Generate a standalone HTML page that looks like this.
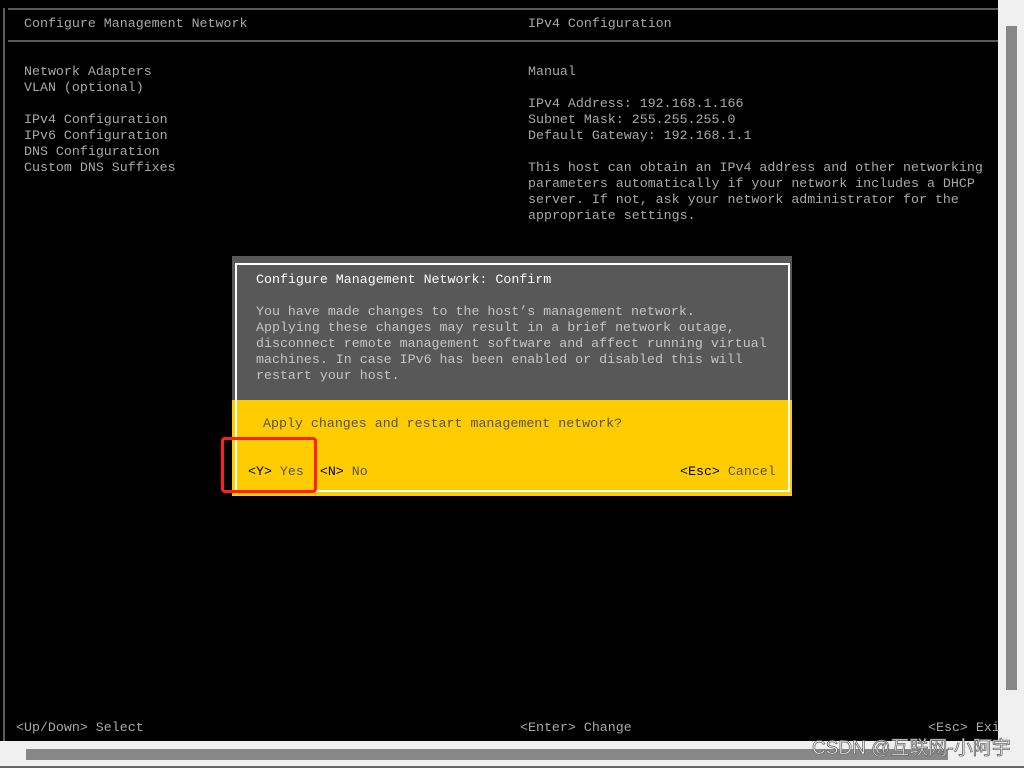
<!DOCTYPE html>
<html><head><meta charset="utf-8"><style>
*{margin:0;padding:0;box-sizing:border-box}
body{width:1024px;height:768px;overflow:hidden;background:#f0f0f0;position:relative;font-family:"Liberation Mono",monospace;font-size:13.3px;line-height:16px}
.scr{position:absolute;left:0;top:0;width:998px;height:741px;background:#000}
.t{position:absolute;white-space:pre;color:#a8a8a8}
.hl{position:absolute;height:2px;background:#5a5a5a}
</style></head><body>
<div class="scr">
<div class="hl" style="left:8px;top:8px;width:990px"></div>
<div class="hl" style="left:8px;top:40px;width:990px"></div>
<div style="position:absolute;left:3px;top:8px;width:2px;height:733px;background:#5a5a5a"></div>
<div class="t" style="left:24px;top:16px">Configure Management Network</div>
<div class="t" style="left:528px;top:16px">IPv4 Configuration</div>
<div class="t" style="left:24px;top:64px">Network Adapters
VLAN (optional)

IPv4 Configuration
IPv6 Configuration
DNS Configuration
Custom DNS Suffixes</div>
<div class="t" style="left:528px;top:64px">Manual

IPv4 Address: 192.168.1.166
Subnet Mask: 255.255.255.0
Default Gateway: 192.168.1.1

This host can obtain an IPv4 address and other networking
parameters automatically if your network includes a DHCP
server. If not, ask your network administrator for the
appropriate settings.</div>
<div class="t" style="left:16px;top:720px">&lt;Up/Down&gt; Select</div>
<div class="t" style="left:520px;top:720px">&lt;Enter&gt; Change</div>
<div class="t" style="left:928px;top:720px">&lt;Esc&gt; Exi</div>

<div style="position:absolute;left:232px;top:256px;width:560px;height:144px;background:#585858"></div>
<div style="position:absolute;left:232px;top:400px;width:560px;height:96px;background:#ffcc00"></div>
<div style="position:absolute;left:235px;top:263px;width:555px;height:229px;border:2px solid #fff"></div>
<div class="t" style="left:256px;top:272px;color:#fff">Configure Management Network: Confirm</div>
<div class="t" style="left:256px;top:304px;color:#c4c4c4">You have made changes to the host’s management network.
Applying these changes may result in a brief network outage,
disconnect remote management software and affect running virtual
machines. In case IPv6 has been enabled or disabled this will
restart your host.</div>
<div class="t" style="left:263px;top:416px;color:#555">Apply changes and restart management network?</div>
<div class="t" style="left:248px;top:464px;color:#555"><span style="color:#000">&lt;Y&gt;</span> Yes  <span style="color:#000">&lt;N&gt;</span> No</div>
<div class="t" style="left:680px;top:464px;color:#555"><span style="color:#000">&lt;Esc&gt;</span> Cancel</div>
<div style="position:absolute;left:221px;top:437px;width:96px;height:56px;border:3px solid #ff2020;border-radius:4px"></div>
</div>
<div style="position:absolute;left:1006px;top:26px;width:11px;height:664px;background:#878787"></div>
<div style="position:absolute;left:26px;top:749px;width:922px;height:11px;background:#878787"></div>
<div style="position:absolute;left:0;top:766px;width:1024px;height:2px;background:#666"></div>
<div style="position:absolute;left:812px;top:736px;font-family:'Liberation Sans','Noto Sans CJK SC',sans-serif;font-size:19px;line-height:25px;color:#fff;-webkit-text-stroke:0.8px #6a6a6a;white-space:nowrap">CSDN @互联网-小阿宇</div>
</body></html>
